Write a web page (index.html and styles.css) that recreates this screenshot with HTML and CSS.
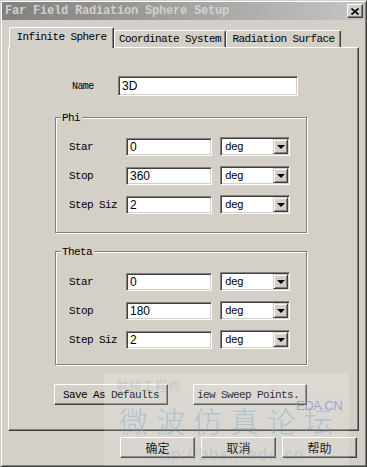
FILE: index.html
```html
<!DOCTYPE html>
<html lang="en">
<head>
    <meta charset="UTF-8">
    <title>Far Field Radiation Sphere Setup</title>
    <link rel="stylesheet" href="styles.css">
</head>
<body>
    <div class="window">
        <div class="titlebar">
            <span class="title">Far Field Radiation Sphere Setup</span>
            <span class="close">
                <svg width="8" height="7" viewBox="0 0 8 7"><path d="M0.5 0.5 L7.5 6.5 M7.5 0.5 L0.5 6.5" stroke="#000" stroke-width="1.6"/></svg>
            </span>
        </div>
        <div class="client">
            <div class="tabs">
                <div class="tab tab-1 active">Infinite Sphere</div>
                <div class="tab tab-2">Coordinate System</div>
                <div class="tab tab-3">Radiation Surface</div>
            </div>
            <div class="panel">
                <div class="name-row">
                    <span class="name-label">Name</span>
                    <div class="field field-name">3D</div>
                </div>

                <div class="group group-phi">
                    <span class="group-title">Phi</span>
                    <div class="row">
                        <span class="row-label">Star</span>
                        <div class="field field-num">0</div>
                        <div class="select"><span class="select-text">deg</span><span class="drop"><i class="arrow"></i></span></div>
                    </div>
                    <div class="row">
                        <span class="row-label">Stop</span>
                        <div class="field field-num">360</div>
                        <div class="select"><span class="select-text">deg</span><span class="drop"><i class="arrow"></i></span></div>
                    </div>
                    <div class="row">
                        <span class="row-label">Step Siz</span>
                        <div class="field field-num">2</div>
                        <div class="select"><span class="select-text">deg</span><span class="drop"><i class="arrow"></i></span></div>
                    </div>
                </div>

                <div class="group group-theta">
                    <span class="group-title">Theta</span>
                    <div class="row">
                        <span class="row-label">Star</span>
                        <div class="field field-num">0</div>
                        <div class="select"><span class="select-text">deg</span><span class="drop"><i class="arrow"></i></span></div>
                    </div>
                    <div class="row">
                        <span class="row-label">Stop</span>
                        <div class="field field-num">180</div>
                        <div class="select"><span class="select-text">deg</span><span class="drop"><i class="arrow"></i></span></div>
                    </div>
                    <div class="row">
                        <span class="row-label">Step Siz</span>
                        <div class="field field-num">2</div>
                        <div class="select"><span class="select-text">deg</span><span class="drop"><i class="arrow"></i></span></div>
                    </div>
                </div>

                <div class="actions">
                    <div class="btn btn-wide">Save As Defaults</div>
                    <div class="btn btn-wide btn-sweep">iew Sweep Points.</div>
                </div>
            </div>
            <div class="footer">
                <div class="btn btn-cn">确定</div>
                <div class="btn btn-cn">取消</div>
                <div class="btn btn-cn">帮助</div>
            </div>
        </div>

        <!-- watermark over the bottom of the dialog -->
        <div class="watermark">
            <span class="wm-small">射频工程师</span>
            <span class="wm-eda">EDA.CN</span>
            <span class="wm-big">微波仿真论坛</span>
            <span class="wm-url">http://bbs.rfeda.cn</span>
        </div>
    </div>
</body>
</html>
```

FILE: styles.css
```css
*{
    margin: 0;
    padding: 0;
    box-sizing: border-box;
}
body{
    background: #d4d0c8;
    font-family: "Liberation Mono", monospace;
    font-size: 11px;
    letter-spacing: -0.6px;
    color: #000;
}
.window{
    position: relative;
    width: 367px;
    height: 467px;
    background: #d4d0c8;
    border: 1px solid;
    border-color: #d4d0c8 #404040 #404040 #d4d0c8;
    box-shadow: inset 1px 1px #fff, inset -1px -1px #808080;
    padding: 1px;
    overflow: hidden;
}
.titlebar{
    height: 18px;
    display: flex;
    align-items: center;
    justify-content: space-between;
    background: linear-gradient(to right, #808080, #c4c4c4);
    padding: 0 2px 0 3px;
}
.title{
    font-weight: bold;
    font-size: 12px;
    letter-spacing: -0.2px;
    color: #d4d0c8;
}
.close{
    width: 16px;
    height: 14px;
    background: #d4d0c8;
    border: 1px solid;
    border-color: #fff #404040 #404040 #fff;
    box-shadow: inset -1px -1px #808080;
    display: flex;
    align-items: center;
    justify-content: center;
}
.client{
    padding: 7px 6px 0 6px;
}

/* tabs */
.tabs{
    display: flex;
    align-items: flex-end;
    height: 20px;
    padding-left: 1px;
    position: relative;
    z-index: 1;
}
.tab{
    height: 17px;
    background: #d4d0c8;
    border: 1px solid;
    border-bottom: none;
    border-color: #fff #404040 transparent #fff;
    box-shadow: inset -1px 0 #808080;
    border-radius: 2px 2px 0 0;
    display: flex;
    align-items: center;
    justify-content: center;
    white-space: nowrap;
}
.tab.active{
    height: 21px;
    margin-bottom: -1px;
    padding-bottom: 2px;
}
.tab-1{ width: 105px; }
.tab-2{ width: 112px; }
.tab-3{ width: 115px; }

.panel{
    height: 384px;
    border: 1px solid;
    border-color: #fff #404040 #404040 #fff;
    box-shadow: inset -1px -1px #808080;
    padding-top: 28px;
}
.name-row{
    display: flex;
    align-items: center;
    padding-left: 63px;
}
.name-label{
    width: 46px;
    font-size: 10px;
}

/* sunken edit box */
.field{
    background: #fff;
    border: 1px solid;
    border-color: #808080 #fff #fff #808080;
    box-shadow: inset 1px 1px #404040, inset -1px -1px #d4d0c8;
    font-family: "Liberation Sans", sans-serif;
    font-size: 12px;
    letter-spacing: 0;
    padding: 0 3px;
    display: flex;
    align-items: center;
}
.field-name{
    width: 180px;
    height: 20px;
}
.field-num{
    width: 86px;
    height: 18px;
    margin-right: 8px;
}

/* group box */
.group{
    position: relative;
    margin: 21px 0 0 46px;
    width: 252px;
    height: 116px;
    border: 1px solid #808080;
    box-shadow: inset 1px 1px #fff, 1px 1px #fff;
    padding: 19px 0 0 13px;
    display: flex;
    flex-direction: column;
    gap: 10px;
}
.group-theta{
    margin-top: 18px;
    height: 114px;
    padding-top: 20px;
}
.group-title{
    position: absolute;
    top: -6px;
    left: 5px;
    background: #d4d0c8;
    padding: 0 2px 0 1px;
    line-height: 12px;
}
.row{
    display: flex;
    align-items: center;
    height: 19px;
}
.row-label{
    width: 57px;
    white-space: nowrap;
}

/* combo box */
.select{
    width: 70px;
    height: 19px;
    background: #fff;
    border: 1px solid;
    border-color: #808080 #fff #fff #808080;
    box-shadow: inset 1px 1px #404040, inset -1px -1px #d4d0c8;
    padding: 1px;
    display: flex;
    align-items: center;
}
.select-text{
    flex: 1;
    padding-left: 3px;
    padding-top: 1px;
}
.drop{
    width: 15px;
    height: 15px;
    background: #d4d0c8;
    border: 1px solid;
    border-color: #d4d0c8 #404040 #404040 #d4d0c8;
    box-shadow: inset 1px 1px #fff, inset -1px -1px #808080;
    display: flex;
    align-items: center;
    justify-content: center;
}
.arrow{
    width: 0;
    height: 0;
    border-left: 4px solid transparent;
    border-right: 4px solid transparent;
    border-top: 4px solid #000;
    margin-top: 1px;
}

/* buttons */
.btn{
    height: 21px;
    background: #d4d0c8;
    border: 1px solid;
    border-color: #fff #404040 #404040 #fff;
    box-shadow: inset -1px -1px #808080;
    display: flex;
    align-items: center;
    justify-content: center;
    white-space: nowrap;
    overflow: hidden;
}
.actions{
    display: flex;
    margin-top: 19px;
    padding-left: 45px;
}
.btn-wide{
    width: 114px;
}
.btn-sweep{
    margin-left: 25px;
    justify-content: flex-start;
    padding-left: 3px;
}
.footer{
    display: flex;
    justify-content: flex-end;
    gap: 6px;
    margin-top: 6px;
    padding-right: 2px;
}
.btn-cn{
    width: 75px;
    font-family: "Noto Sans CJK SC", sans-serif;
    font-size: 12px;
    letter-spacing: 0;
}

/* forum watermark */
.watermark{
    position: absolute;
    left: 103px;
    top: 372px;
    width: 245px;
    height: 95px;
    background: linear-gradient(rgba(255,255,255,0.2), rgba(255,255,255,0.1));
    pointer-events: none;
}
.wm-small{
    position: absolute;
    left: 12px;
    top: 4px;
    font-family: "Noto Sans CJK SC", sans-serif;
    font-size: 12px;
    letter-spacing: 1px;
    color: rgba(150,140,170,0.3);
}
.wm-eda{
    position: absolute;
    left: 192px;
    top: 25px;
    font-family: "Liberation Sans", sans-serif;
    font-size: 13px;
    letter-spacing: -0.5px;
    color: rgba(120,130,210,0.65);
}
.wm-big{
    position: absolute;
    left: 15px;
    top: 33px;
    font-family: "Noto Sans CJK SC", sans-serif;
    font-size: 29px;
    font-weight: 300;
    line-height: 1;
    letter-spacing: 8px;
    color: rgba(100,165,210,0.4);
}
.wm-url{
    position: absolute;
    left: 45px;
    top: 72px;
    font-family: "Liberation Sans", sans-serif;
    font-size: 17px;
    letter-spacing: 1px;
    color: rgba(110,150,190,0.25);
}
```
